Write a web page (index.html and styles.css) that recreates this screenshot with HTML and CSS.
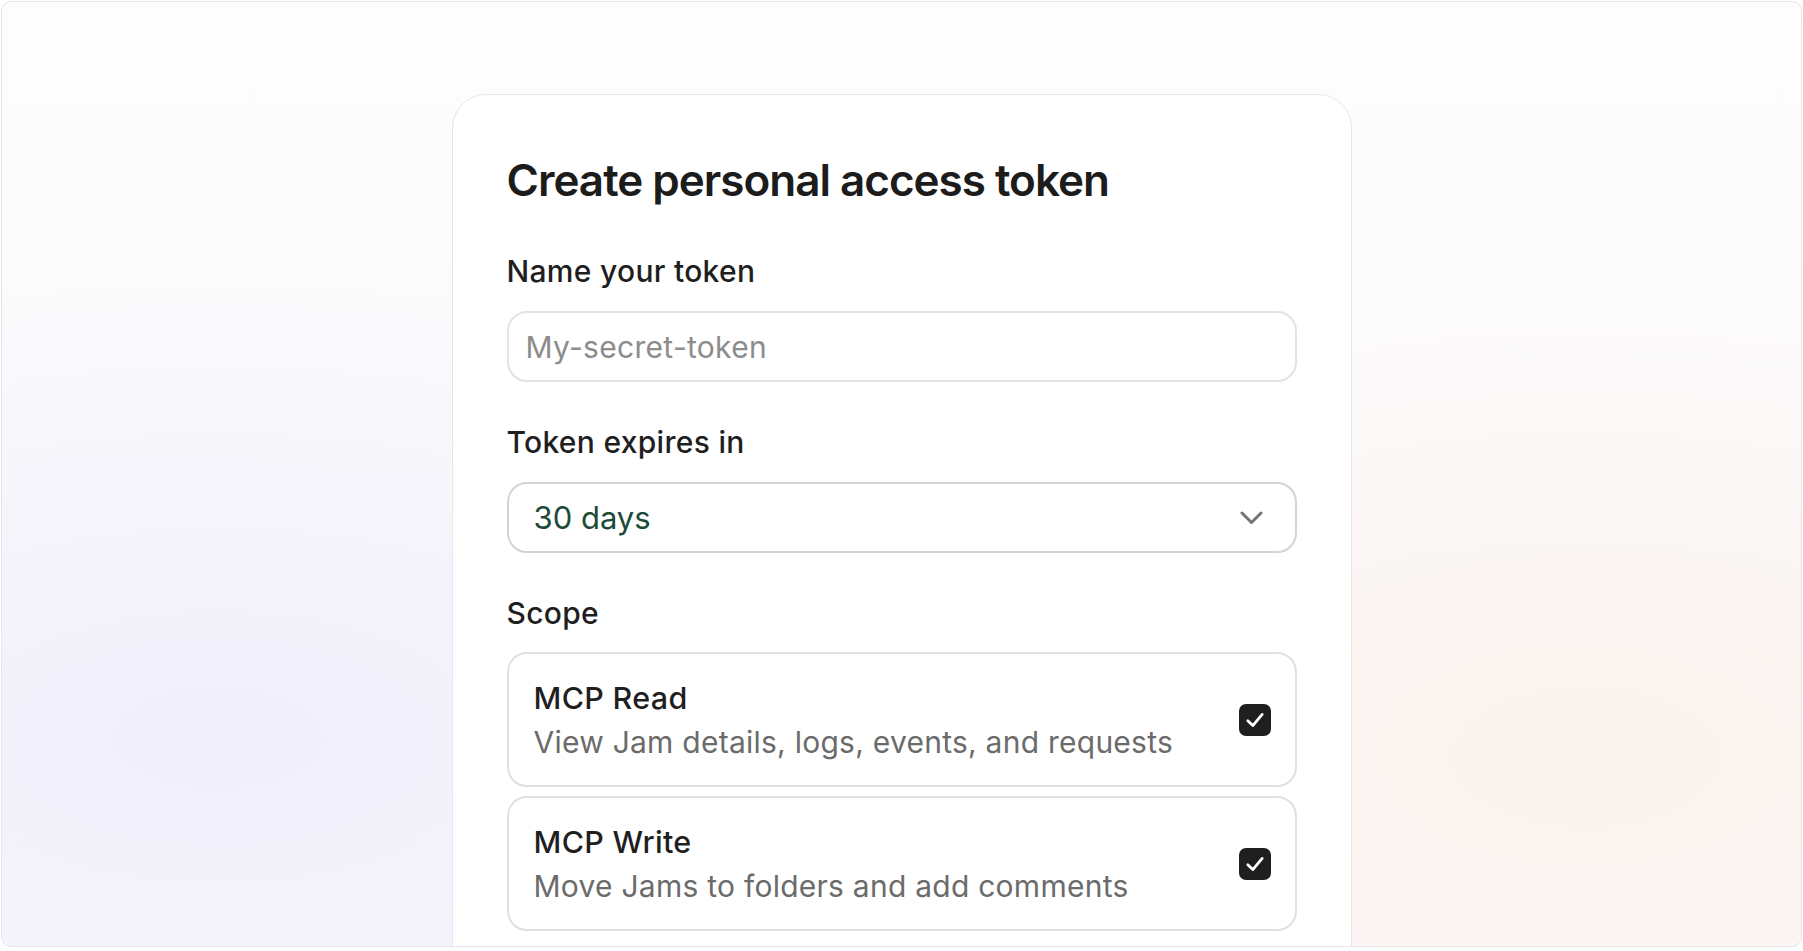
FILE: index.html
```html
<!DOCTYPE html>
<html lang="en">
<head>
<meta charset="utf-8">
<title>Create personal access token</title>
<link rel="stylesheet" href="styles.css">
</head>
<body>
<div class="frame">
  <div class="card">
    <h1 class="title">Create personal access token</h1>

    <label class="label" for="token-name">Name your token</label>
    <div class="input">
      <span class="placeholder" id="token-name">My-secret-token</span>
    </div>

    <div class="label label-gap">Token expires in</div>
    <div class="select">
      <span class="select-value">30 days</span>
      <svg class="chevron" width="23" height="14" viewBox="0 0 23 14" aria-hidden="true">
        <path d="M2 2 L11.5 11.5 L21 2" fill="none" stroke="#747474" stroke-width="3" stroke-linecap="round" stroke-linejoin="round"/>
      </svg>
    </div>

    <div class="label label-gap">Scope</div>
    <div class="scopes">
      <div class="scope">
        <div class="scope-text">
          <div class="scope-name">MCP Read</div>
          <div class="scope-desc">View Jam details, logs, events, and requests</div>
        </div>
        <span class="checkbox">
          <svg width="32" height="32" viewBox="0 0 32 32" aria-hidden="true">
            <path d="M8.8 16.8 L13.8 21.6 L23.2 10.4" fill="none" stroke="#ffffff" stroke-width="2.8" stroke-linecap="round" stroke-linejoin="round"/>
          </svg>
        </span>
      </div>
      <div class="scope">
        <div class="scope-text">
          <div class="scope-name">MCP Write</div>
          <div class="scope-desc">Move Jams to folders and add comments</div>
        </div>
        <span class="checkbox">
          <svg width="32" height="32" viewBox="0 0 32 32" aria-hidden="true">
            <path d="M8.8 16.8 L13.8 21.6 L23.2 10.4" fill="none" stroke="#ffffff" stroke-width="2.8" stroke-linecap="round" stroke-linejoin="round"/>
          </svg>
        </span>
      </div>
    </div>
  </div>
</div>
</body>
</html>
```

FILE: styles.css
```css
* {
  box-sizing: border-box;
}

html, body {
  margin: 0;
  padding: 0;
  background: #ffffff;
}

body {
  font-family: Inter, "Noto Sans", "Liberation Sans", sans-serif;
  color: #1f1f1f;
}

.frame {
  margin: 1px;
  height: 946px;
  border: 1px solid #e6e6e8;
  border-radius: 10px;
  overflow: hidden;
  padding-top: 92px;
  background:
    radial-gradient(ellipse 60% 55% at 12% 78%, rgba(238, 235, 250, 0.8) 0%, rgba(238, 235, 250, 0) 100%),
    radial-gradient(ellipse 55% 55% at 88% 80%, rgba(250, 241, 236, 0.9) 0%, rgba(250, 241, 236, 0) 100%),
    linear-gradient(180deg, #fdfdfd 0%, #fbfafc 100%);
}

.card {
  width: 900px;
  margin: 0 auto;
  background: #ffffff;
  border: 1px solid #e6e6e6;
  border-radius: 34px;
  padding: 59px 54px 80px;
  display: flex;
  flex-direction: column;
}

.title {
  margin: 0;
  font-size: 44px;
  line-height: 53px;
  font-weight: 600;
  letter-spacing: -1px;
  color: #1c1c1c;
}

.label {
  display: block;
  margin-top: 44px;
  font-size: 30px;
  line-height: 40px;
  font-weight: 450;
  letter-spacing: 0.3px;
  color: #1f1f1f;
}

.label-gap {
  margin-top: 40px;
}

.input,
.select {
  margin-top: 20px;
  height: 71px;
  border-radius: 20px;
  display: flex;
  align-items: center;
  background: #ffffff;
}

.input {
  border: 2px solid #e3e3e3;
  padding: 0 17px;
}

.placeholder {
  font-size: 30px;
  letter-spacing: 0.3px;
  color: #8c8c8c;
}

.select {
  border: 2px solid #d3d3d3;
  padding: 0 32px 0 25px;
  justify-content: space-between;
}

.select-value {
  font-size: 31px;
  color: #1d4a38;
}

.chevron {
  display: block;
}

.scopes {
  margin-top: 19px;
  display: flex;
  flex-direction: column;
  gap: 9px;
}

.scope {
  border: 2px solid #e0e0e0;
  border-radius: 20px;
  padding: 21px 24px 20px 25px;
  display: flex;
  align-items: center;
  justify-content: space-between;
}

.scope-name {
  font-size: 30.5px;
  line-height: 45px;
  font-weight: 500;
  letter-spacing: 0.3px;
  color: #1f1f1f;
}

.scope-desc {
  font-size: 30px;
  line-height: 45px;
  letter-spacing: 0.25px;
  color: #6b6b6b;
}

.checkbox {
  width: 32px;
  height: 32px;
  border-radius: 7px;
  background: #1f1f1f;
  display: flex;
  align-items: center;
  justify-content: center;
  flex: none;
}

.checkbox svg {
  display: block;
}
```
